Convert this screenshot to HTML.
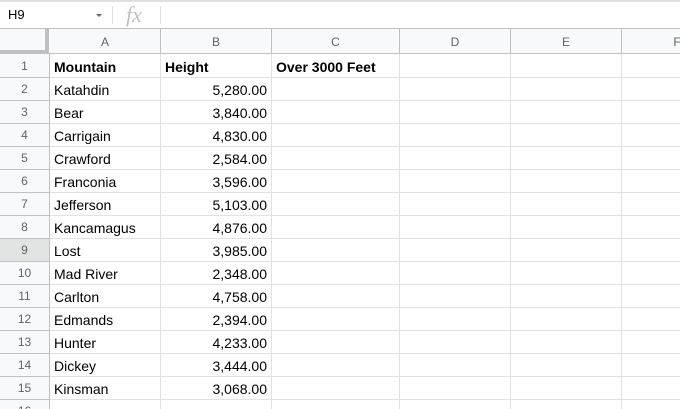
<!DOCTYPE html><html style="overflow:hidden;height:409px"><head><style>
body{margin:0;width:680px;height:409px;overflow:hidden;background:#fff;font-family:"Liberation Sans",Arial,sans-serif;position:relative}
div{position:absolute;box-sizing:border-box}
.hl{background:#e2e3e3!important}
.c{font-size:14px;color:#000;line-height:24px;white-space:nowrap}
.rh{left:0;width:49px;text-align:center;font-size:12px;color:#5f6368;line-height:23px;background:#f8f9fa}
.ch{top:29px;height:25px;text-align:center;font-size:12px;color:#5f6368;line-height:26px}
</style></head><body>
<div style="left:0;top:0;width:680px;height:2px;background:#e0e0e0"></div>
<div style="left:8px;top:7px;font-size:13px;color:#000">H9</div>
<div style="left:96px;top:14px;width:0;height:0;border-left:3px solid transparent;border-right:3px solid transparent;border-top:3px solid #666"></div>
<div style="left:112px;top:6px;width:1px;height:18px;background:#e0e0e0"></div>
<div style="left:126px;top:2px;font-family:'Liberation Serif',serif;font-style:italic;font-size:22px;color:#c0c0c0">fx</div>
<div style="left:160px;top:6px;width:1px;height:18px;background:#e0e0e0"></div>
<div style="left:0;top:28px;width:680px;height:26px;background:#f8f9fa;border-top:1px solid #c0c0c0;border-bottom:1px solid #c0c0c0"></div>
<div style="left:0;top:29px;width:49px;height:25px;border-right:4px solid #c0c0c0;border-bottom:4px solid #c0c0c0"></div>
<div style="left:0;top:54px;width:50px;height:355px;background:#f8f9fa;border-right:1px solid #c0c0c0"></div>
<div class="ch" style="left:50px;width:110px">A</div>
<div class="ch" style="left:161px;width:110px">B</div>
<div class="ch" style="left:272px;width:127px">C</div>
<div class="ch" style="left:400px;width:110px">D</div>
<div class="ch" style="left:511px;width:110px">E</div>
<div class="ch" style="left:622px;width:110px">F</div>
<div id="g"></div>
<script>
var cols=[160,271,399,510,621],h='';
cols.forEach(function(x){h+='<div style="left:'+x+'px;top:29px;width:1px;height:25px;background:#c0c0c0"></div><div style="left:'+x+'px;top:54px;width:1px;height:355px;background:#e2e2e2"></div>'});
var d=[["Mountain","Height","Over 3000 Feet"],["Katahdin","5,280.00"],["Bear","3,840.00"],["Carrigain","4,830.00"],["Crawford","2,584.00"],["Franconia","3,596.00"],["Jefferson","5,103.00"],["Kancamagus","4,876.00"],["Lost","3,985.00"],["Mad River","2,348.00"],["Carlton","4,758.00"],["Edmands","2,394.00"],["Hunter","4,233.00"],["Dickey","3,444.00"],["Kinsman","3,068.00"],["",""]];
for(var i=0;i<16;i++){var y=55+i*23,hh=i==15?409-y:23;
h+='<div class="rh'+(i==8?' hl':'')+'" style="top:'+y+'px;height:'+hh+'px;overflow:hidden">'+(i+1)+'</div>';
if(i<15){h+='<div style="left:0;top:'+(y+22)+'px;width:49px;height:1px;background:#c0c0c0"></div>';
h+='<div style="left:50px;top:'+(y+22)+'px;width:630px;height:1px;background:#e2e2e2"></div>';}
var r=d[i],b=i==0?'font-weight:bold;':'';
h+='<div class="c" style="'+b+'left:54px;top:'+y+'px">'+r[0]+'</div>';
if(i==0)h+='<div class="c" style="'+b+'left:165px;top:'+y+'px">'+r[1]+'</div><div class="c" style="'+b+'left:276px;top:'+y+'px">'+r[2]+'</div>';
else h+='<div class="c" style="left:161px;width:106px;text-align:right;top:'+y+'px">'+r[1]+'</div>';}
document.getElementById('g').outerHTML=h;
</script>
</body></html>
